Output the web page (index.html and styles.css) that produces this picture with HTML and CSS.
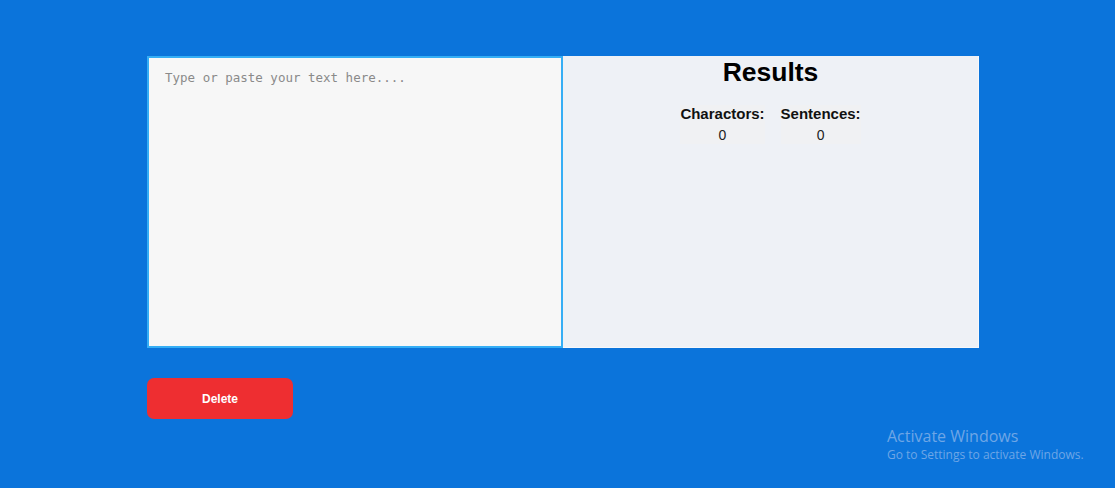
FILE: index.html
```html
<!DOCTYPE html>
<html>
<head>
<meta charset="utf-8">
<link rel="stylesheet" href="styles.css">
</head>
<body>
<main class="app">
  <section class="workspace">
    <textarea class="editor" placeholder="Type or paste your text here...."></textarea>
    <div class="results">
      <h1 class="results-title">Results</h1>
      <div class="stats">
        <div class="stat">
          <div class="stat-label">Charactors:</div>
          <div class="stat-value">0</div>
        </div>
        <div class="stat">
          <div class="stat-label">Sentences:</div>
          <div class="stat-value">0</div>
        </div>
      </div>
    </div>
  </section>
  <div class="actions">
    <button class="delete-btn">Delete</button>
  </div>
</main>
<div class="watermark">
  <div class="wm-title">Activate Windows</div>
  <div class="wm-sub">Go to Settings to activate Windows.</div>
</div>
</body>
</html>
```
FILE: styles.css
```css
html, body {
  margin: 0;
  padding: 0;
  height: 100%;
}
body {
  background: #0b74db;
  font-family: "Liberation Sans", Arial, sans-serif;
  overflow: hidden;
}
.app {
  padding: 56px 0 0 147px;
}
.workspace {
  display: flex;
  width: 832px;
  height: 292px;
}
.editor {
  box-sizing: border-box;
  width: 416px;
  height: 292px;
  margin: 0;
  padding: 12px 16px;
  border: 2px solid #35aef5;
  background: #f7f7f7;
  font-family: "DejaVu Sans Mono", "Liberation Mono", monospace;
  font-size: 12.5px;
  color: #333;
  resize: none;
  outline: none;
}
.editor::placeholder {
  color: #8a8a8a;
}
.results {
  box-sizing: border-box;
  width: 416px;
  height: 292px;
  background: #eef1f6;
  border-right: 1px solid #f6f8fb;
  border-bottom: 1px solid #f6f8fb;
  display: flex;
  flex-direction: column;
  align-items: center;
}
.results-title {
  margin: 1px 0 0;
  font-size: 26.5px;
  font-weight: bold;
  color: #000;
  line-height: 30px;
}
.stats {
  display: flex;
  gap: 16px;
  margin-top: 18px;
}
.stat {
  display: flex;
  flex-direction: column;
  align-items: center;
  background: #f0f1f3;
}
.stat-label {
  font-size: 15px;
  font-weight: bold;
  color: #111;
  line-height: 18px;
}
.stat-value {
  font-size: 14px;
  color: #222;
  line-height: 18px;
  margin-top: 3px;
}
.actions {
  margin-top: 30px;
}
.delete-btn {
  width: 146px;
  height: 41px;
  border: none;
  border-radius: 7px;
  background: #ee2e31;
  color: #fff;
  font-family: "Liberation Sans", Arial, sans-serif;
  font-weight: bold;
  font-size: 12px;
  padding: 0;
  cursor: pointer;
}
.watermark {
  position: absolute;
  left: 887px;
  top: 425px;
  color: #6ea6e6;
  font-family: "Open Sans", "Noto Sans", sans-serif;
}
.wm-title {
  font-size: 16px;
  line-height: 22px;
}
.wm-sub {
  font-size: 12px;
  line-height: 16px;
}
```
